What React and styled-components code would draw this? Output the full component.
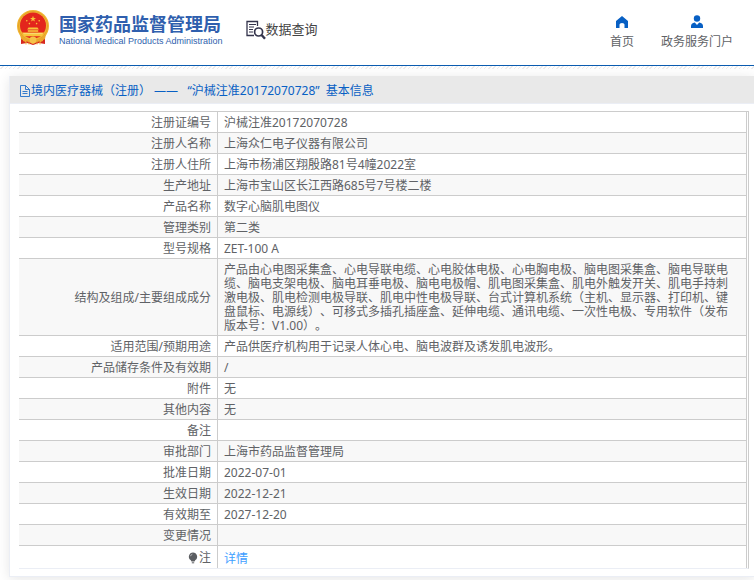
import React from 'react';
import styled, { createGlobalStyle } from 'styled-components';

const rows = [
  { label: '注册证编号', value: '沪械注准20172070728' },
  { label: '注册人名称', value: '上海众仁电子仪器有限公司' },
  { label: '注册人住所', value: '上海市杨浦区翔殷路81号4幢2022室' },
  { label: '生产地址', value: '上海市宝山区长江西路685号7号楼二楼' },
  { label: '产品名称', value: '数字心脑肌电图仪' },
  { label: '管理类别', value: '第二类' },
  { label: '型号规格', value: 'ZET-100 A' },
  {
    label: '结构及组成/主要组成成分',
    value:
      '产品由心电图采集盒、心电导联电缆、心电胶体电极、心电胸电极、脑电图采集盒、脑电导联电缆、脑电支架电极、脑电耳垂电极、脑电电极帽、肌电图采集盒、肌电外触发开关、肌电手持刺激电极、肌电检测电极导联、肌电中性电极导联、台式计算机系统（主机、显示器、打印机、键盘鼠标、电源线）、可移式多插孔插座盒、延伸电缆、通讯电缆、一次性电极、专用软件（发布版本号：V1.00）。',
  },
  {
    label: '适用范围/预期用途',
    value: '产品供医疗机构用于记录人体心电、脑电波群及诱发肌电波形。',
  },
  { label: '产品储存条件及有效期', value: '/' },
  { label: '附件', value: '无' },
  { label: '其他内容', value: '无' },
  { label: '备注', value: '' },
  { label: '审批部门', value: '上海市药品监督管理局' },
  { label: '批准日期', value: '2022-07-01' },
  { label: '生效日期', value: '2022-12-21' },
  { label: '有效期至', value: '2027-12-20' },
  { label: '变更情况', value: '' },
];

const Emblem = () => (
  <svg width="34" height="36" viewBox="0 0 34 36" aria-hidden="true">
    <path
      d="M5 25 L5 34 L11 33 L17 35 L23 33 L29 34 L29 25 Z"
      fill="#d7281f"
    />
    <circle cx="17" cy="16" r="16" fill="#f2b632" />
    <circle cx="17" cy="16" r="14.6" fill="none" stroke="#d99425" strokeWidth="0.6" />
    <circle cx="17" cy="15.5" r="13" fill="#e3261c" />
    <path
      d="M17 5.8l.8 2.1h2.2l-1.8 1.4.7 2.2-1.9-1.3-1.9 1.3.7-2.2L14 7.9h2.2z"
      fill="#f8c53a"
    />
    <g fill="#f8c53a">
      <circle cx="10.8" cy="10.8" r="0.8" />
      <circle cx="13.4" cy="13.6" r="0.8" />
      <circle cx="20.6" cy="13.6" r="0.8" />
      <circle cx="23.2" cy="10.8" r="0.8" />
      <path d="M12.5 17.6h9l1.3 2H11.2z" />
      <path d="M11.8 20.2h10.4v1.6H11.8z" />
      <path d="M6 22.4h22l-2 3.8H8z" />
    </g>
    <path d="M7.4 23.6h19.2" stroke="#f9df87" strokeWidth="0.8" />
    <path d="M4 24q5 6 13 6t13-6l-1 5q-4 3-8 3l-4 2-4-2q-4 0-8-3z" fill="#eba62d" />
    <circle cx="17" cy="30" r="3.4" fill="#f5c34a" />
    <path d="M7 30.5l3 1v3M27 30.5l-3 1v3M13 32.5v2M21 32.5v2" stroke="#f2b632" fill="none" />
  </svg>
);

const SearchDocIcon = () => (
  <svg width="20" height="20" viewBox="0 0 20 20" fill="none" stroke="#34344c" aria-hidden="true">
    <path d="M11.5 6V1.5H1v14h7" strokeWidth="1.3" />
    <path d="M3 4.5h7M3 7h5M3 9.5h4M3 12h4" strokeWidth="1" />
    <circle cx="12.6" cy="12" r="4" strokeWidth="1.7" />
    <path d="M15.6 15l3.4 3.8" strokeWidth="2.4" />
  </svg>
);

const HomeIcon = () => (
  <svg width="14" height="14" viewBox="0 0 14 14" fill="#0860c4" aria-hidden="true">
    <path d="M7 1L1 6v7h3.5V9.5Q4.500 8 7 8t2.500 1.500V13H13V6z" />
  </svg>
);

const UserIcon = () => (
  <svg width="14" height="14" viewBox="0 0 14 14" fill="#0860c4" aria-hidden="true">
    <circle cx="7" cy="3.5" r="3.2" />
    <path d="M1 13v-2q0-3 3.8-3.6L7 10l2.2-2.6Q13 8 13 11v2z" />
  </svg>
);

const DocIcon = () => (
  <svg width="12" height="12" viewBox="0 0 12 12" fill="none" stroke="#0860c4" aria-hidden="true">
    <path d="M1.5 .5h5l4 4v7h-9zM6.5 .5v4h4M3.5 6.5h5M3.5 8.5h5" strokeWidth="0.8" />
  </svg>
);

const BulbIcon = () => (
  <svg width="10" height="12" viewBox="0 0 10 12" aria-hidden="true">
    <path d="M5 .5a4.2 4.2 0 0 0-2.4 7.6L3.5 9.5h3l.9-1.4A4.2 4.2 0 0 0 5 .5z" fill="#5b5d61" />
    <path d="M3.8 10.8h2.4" stroke="#5b5d61" />
    <path d="M2.5 4.2Q2.8 2.6 4.4 2.2" stroke="#c8c9cc" fill="none" strokeWidth="0.8" />
  </svg>
);

export default function App() {
  return (
    <>
      <GlobalStyle />
      <Header>
        <Brand>
          <Emblem />
          <BrandText>
            <h1>国家药品监督管理局</h1>
            <p>National Medical Products Administration</p>
          </BrandText>
        </Brand>
        <Section>
          <SearchDocIcon />
          <span>数据查询</span>
        </Section>
        <Nav>
          <NavLink href="#home">
            <HomeIcon />
            首页
          </NavLink>
          <NavLink href="#portal">
            <UserIcon />
            政务服务门户
          </NavLink>
        </Nav>
      </Header>
      <Hatch />
      <Panel>
        <PanelTitle>
          <DocIcon />
          {'境内医疗器械（注册） ——   “沪械注准20172070728”  基本信息'}
        </PanelTitle>
        <TableWrap>
          <Table>
            <tbody>
              {rows.map(row => (
                <Row key={row.label}>
                  <Label scope="row">{row.label}</Label>
                  <Value>{row.value}</Value>
                </Row>
              ))}
              <Row>
                <Label scope="row">
                  <Note>
                    <BulbIcon />注
                  </Note>
                </Label>
                <Value>
                  <DetailLink href="#detail">详情</DetailLink>
                </Value>
              </Row>
            </tbody>
          </Table>
        </TableWrap>
      </Panel>
    </>
  );
}

const GlobalStyle = createGlobalStyle`
  * {
    box-sizing: border-box;
  }

  body {
    margin: 0;
    background: #fff;
    color: #606266;
    font-family: 'Noto Sans', 'Noto Sans CJK SC', sans-serif;
    font-size: 12px;
    line-height: 14px;
    text-spacing-trim: space-all;
  }

  h1, h2, p {
    margin: 0;
  }

  a {
    text-decoration: none;
  }

  svg {
    display: block;
    flex-shrink: 0;
  }
`;

const Header = styled.header`
  display: flex;
  align-items: flex-start;
  height: 66px;
  padding: 10px 21px 0 16px;
  border-bottom: 1px solid #0b5cb0;
`;

const Brand = styled.div`
  display: flex;
  gap: 9px;
`;

const BrandText = styled.div`
  padding-top: 3px;
  color: #2f5fae;
  white-space: nowrap;

  h1 {
    font-size: 18px;
    font-weight: 700;
    line-height: 22px;
  }

  p {
    font-family: 'Liberation Sans', Arial, sans-serif;
    font-size: 9px;
    line-height: 12px;
  }
`;

const Section = styled.div`
  display: flex;
  align-items: center;
  padding: 10px 0 0 23px;
  color: #444;
  font-size: 13px;
  line-height: 18px;
  white-space: nowrap;

  span {
    padding-bottom: 2px;
  }
`;

const Nav = styled.nav`
  display: flex;
  gap: 27px;
  margin-left: auto;
  padding-top: 5px;
`;

const NavLink = styled.a`
  display: flex;
  flex-direction: column;
  align-items: center;
  gap: 6px;
  color: #606266;
  white-space: nowrap;
`;

const Hatch = styled.div`
  height: 3px;
  background: repeating-linear-gradient(135deg, #fff 0 2px, #eeecec 2px 3px);
`;

const Panel = styled.main`
  margin: 7px 0 3px 9px;
  padding-bottom: 7px;
  border: 1px solid #ebeef5;
  border-top: 0;
  border-right: 0;
  box-shadow: 0 2px 12px rgba(0, 0, 0, 0.1);
`;

const PanelTitle = styled.h2`
  display: flex;
  align-items: center;
  height: 28px;
  padding: 2px 0 0 9px;
  border-bottom: 1px solid #ebeef5;
  background: #e9e9e9;
  color: #0860c4;
  font-size: 12px;
  font-weight: 400;
  white-space: pre;
`;

const TableWrap = styled.div`
  margin: 7px 5px 0 9px;
  padding-right: 1px;
  border: 1px solid #ccc;
  border-left: 0;
  border-bottom-color: #ebeef5;
`;

const Table = styled.table`
  width: 100%;
  border-collapse: separate;
  border-spacing: 0;
  border-right: 1px solid #ccc;
  table-layout: fixed;
`;

const Label = styled.th`
  width: 199px;
  padding: 4px 6px 2px;
  border-right: 1px solid #ccc;
  border-bottom: 1px solid #ccc;
  font-weight: 400;
  text-align: right;
`;

const Value = styled.td`
  padding: 4px 12px 2px 6px;
  border-bottom: 1px solid #ccc;
  word-break: break-all;
`;

const Row = styled.tr`
  height: 21px;

  &:nth-child(even) {
    background: #f8f8f8;
  }

  &:last-child {
    height: 22px;
    background: #fff;

    th,
    td {
      border-bottom: 0;
    }
  }
`;

const Note = styled.span`
  display: flex;
  align-items: center;
  justify-content: flex-end;
  gap: 1px;
`;

const DetailLink = styled.a`
  display: block;
  padding-top: 2px;
  color: #409eff;
`;
